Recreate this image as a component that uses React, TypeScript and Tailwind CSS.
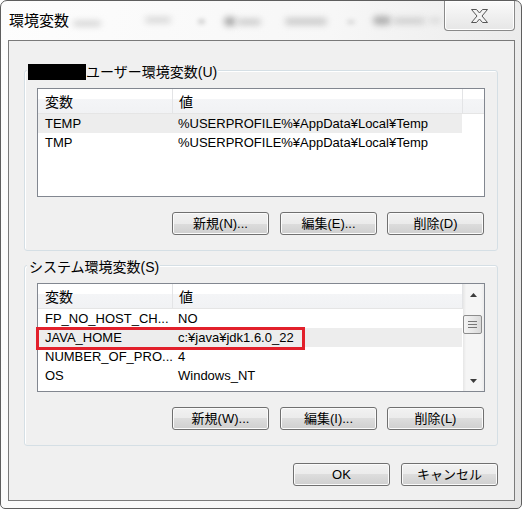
import React from "react";

type Row = { name: string; value: string; hl?: boolean };

function Btn({ label }: { label: string }) {
  return (
    <div className="flex h-[23px] w-[97px] items-center justify-center rounded-[3px] border border-[#707070] bg-[linear-gradient(to_bottom,#f2f2f2_0%,#ebebeb_50%,#dddddd_50%,#cfcfcf_100%)] text-[13px] leading-none text-black shadow-[inset_0_0_0_1px_#fbfbfb]">
      {label}
    </div>
  );
}

function Arrow({ down }: { down?: boolean }) {
  return (
    <svg width="7" height="4" viewBox="0 0 7 4">
      {down ? <polygon points="0,0 7,0 3.5,4" fill="#3c3c3c" /> : <polygon points="0,4 7,4 3.5,0" fill="#3c3c3c" />}
    </svg>
  );
}

function Scrollbar() {
  return (
    <div className="flex w-[21px] flex-col bg-[linear-gradient(to_right,#e6e6e6,#f5f5f5_15%,#f5f5f5_85%,#ececec)]">
      <div className="flex h-[21px] items-center justify-center">
        <Arrow />
      </div>
      <div className="mt-[10px] flex h-[19px] w-[19px] flex-col items-center justify-center gap-[2px] rounded-[2px] border border-[#8c8c8c] bg-[linear-gradient(to_right,#f4f4f4,#e8e8e8_50%,#d9d9d9)]">
        <div className="h-[1px] w-[9px] bg-[#777]" />
        <div className="h-[1px] w-[9px] bg-[#777]" />
        <div className="h-[1px] w-[9px] bg-[#777]" />
      </div>
      <div className="mt-auto flex h-[21px] items-center justify-center">
        <Arrow down />
      </div>
    </div>
  );
}

function ListView({ rows, scroll, redBox }: { rows: Row[]; scroll?: boolean; redBox?: boolean }) {
  return (
    <div className="relative flex h-[109px] w-[448px] border border-[#828790] bg-white">
      <div className="flex min-w-0 flex-1 flex-col">
        <div className="flex h-[25px] border-b border-[#e5e5e5] bg-[linear-gradient(to_bottom,#ffffff_0%,#ffffff_42%,#f4f5f7_42%,#f1f2f4_100%)] text-[14px] text-black">
          <div className="flex w-[135px] items-center border-r border-[#e3e4e6] pl-[7px] pt-[2px]">変数</div>
          <div className="flex w-[290px] items-center border-r border-[#e3e4e6] pl-[6px] pt-[2px]">値</div>
          <div className="flex-1" />
        </div>
        {rows.map((r) => (
          <div
            key={r.name}
            className={`flex h-[19px] w-[424px] items-center text-[13px] text-black ${r.hl ? "bg-[#ededed]" : ""}`}
          >
            <div className="w-[135px] whitespace-nowrap pl-[7px]">{r.name}</div>
            <div className="whitespace-nowrap pl-[5px]">{r.value}</div>
          </div>
        ))}
      </div>
      {scroll && <Scrollbar />}
      {redBox && (
        <div className="absolute left-[-2px] top-[43px] h-[23px] w-[269px] border-[3px] border-[#e2202b]" />
      )}
    </div>
  );
}

function Group({
  label,
  rows,
  buttons,
  scroll,
  redBox,
}: {
  label: React.ReactNode;
  rows: Row[];
  buttons: string[];
  scroll?: boolean;
  redBox?: boolean;
}) {
  return (
    <div className="relative flex h-[181px] w-[474px] flex-col rounded-[3px] border border-[#d5dfe5] px-[12px] pb-[15px] pt-[17px] shadow-[inset_1px_1px_0_#ffffff]">
      <div className="absolute left-[2px] top-[-8px] flex h-[18px] items-center bg-[#f0f0f0] px-[1px] text-[14px] leading-[18px] text-black">
        {label}
      </div>
      <ListView rows={rows} scroll={scroll} redBox={redBox} />
      <div className="mt-[15px] flex justify-end pr-[1px]">
        <div className="flex gap-[11px]">
          <Btn label={buttons[0]} />
          <Btn label={buttons[1]} />
        </div>
        <div className="ml-[10px]">
          <Btn label={buttons[2]} />
        </div>
      </div>
    </div>
  );
}

export default function App() {
  const userRows: Row[] = [
    { name: "TEMP", value: "%USERPROFILE%¥AppData¥Local¥Temp", hl: true },
    { name: "TMP", value: "%USERPROFILE%¥AppData¥Local¥Temp" },
  ];
  const sysRows: Row[] = [
    { name: "FP_NO_HOST_CH...", value: "NO" },
    { name: "JAVA_HOME", value: "c:¥java¥jdk1.6.0_22", hl: true },
    { name: "NUMBER_OF_PRO...", value: "4" },
    { name: "OS", value: "Windows_NT" },
  ];
  return (
    <div className="h-[509px] w-[522px] bg-white font-['Liberation_Sans','Noto_Sans_CJK_JP',sans-serif]">
      <div className="relative flex h-[509px] w-[522px] flex-col overflow-hidden rounded-t-[7px] rounded-b-[5px] border border-[#5e5e5e] bg-[linear-gradient(100deg,#fdfdfd_0%,#f7f7f7_55%,#ececec_85%,#e4e4e4_100%)]">
        {/* blurred background through glass */}
        <div className="pointer-events-none absolute left-0 top-0 h-[39px] w-full">
          <span className="absolute left-[72px] top-[20px] h-[5px] w-[28px] rounded-full bg-[#cfcfcf] blur-[3px]" />
          <span className="absolute left-[144px] top-[16px] h-[6px] w-[26px] rounded-full bg-[#d6d6d6] blur-[3px]" />
          <span className="absolute left-[197px] top-[18px] h-[5px] w-[7px] rounded-full bg-[#cfcfcf] blur-[2px]" />
          <span className="absolute left-[223px] top-[16px] h-[9px] w-[12px] rounded-full bg-[#a8a8a8] blur-[3px]" />
          <span className="absolute left-[236px] top-[18px] h-[6px] w-[24px] rounded-full bg-[#c9c9c9] blur-[3px]" />
          <span className="absolute left-[284px] top-[17px] h-[7px] w-[42px] rounded-full bg-[#cacaca] blur-[3px]" />
          <span className="absolute left-[346px] top-[19px] h-[4px] w-[8px] rounded-full bg-[#d6d6d6] blur-[2px]" />
          <span className="absolute left-[372px] top-[15px] h-[9px] w-[18px] rounded-full bg-[#b0b0b0] blur-[3px]" />
          <span className="absolute left-[392px] top-[17px] h-[6px] w-[32px] rounded-full bg-[#cccccc] blur-[3px]" />
          <span className="absolute left-[428px] top-[17px] h-[5px] w-[12px] rounded-full bg-[#d6d6d6] blur-[3px]" />
        </div>
        {/* title bar */}
        <div className="relative flex h-[39px] items-center pl-[8px] pt-[1px] text-[15px] text-black">
          環境変数
        </div>
        {/* close button */}
        <div className="absolute right-[6px] top-0 flex h-[30px] w-[71px] items-center justify-center rounded-b-[4px] border border-t-0 border-[#8a8a8a] bg-[linear-gradient(to_bottom,#fbfbfb,#f0f0f0_50%,#e6e6e6)] shadow-[inset_0_0_0_1px_#ffffff]">
          <svg width="19" height="16" viewBox="0 0 19 16">
            <polygon
              points="1.5,1.5 6.5,1.5 9.5,5 12.5,1.5 17.5,1.5 12,8 17.5,14.5 12.5,14.5 9.5,11 6.5,14.5 1.5,14.5 7,8"
              fill="#f4f4f4"
              stroke="#555555"
              strokeWidth="1"
              strokeLinejoin="round"
            />
          </svg>
        </div>
        {/* client area */}
        <div className="ml-[7px] flex h-[461px] w-[507px] flex-col border border-[#7a7a7a] bg-[#f0f0f0] pl-[15px] pr-[16px] pt-[29px]">
          <Group
            label={
              <>
                <span className="inline-block h-[16px] w-[58px] bg-black" />
                <span>ユーザー環境変数(U)</span>
              </>
            }
            rows={userRows}
            buttons={["新規(N)...", "編集(E)...", "削除(D)"]}
          />
          <div className="mt-[14px]">
            <Group
              label={<span className="pl-[1px]">システム環境変数(S)</span>}
              rows={sysRows}
              buttons={["新規(W)...", "編集(I)...", "削除(L)"]}
              scroll
              redBox
            />
          </div>
          <div className="mt-[17px] flex justify-end gap-[11px]">
            <Btn label="OK" />
            <Btn label="キャンセル" />
          </div>
        </div>
      </div>
    </div>
  );
}
